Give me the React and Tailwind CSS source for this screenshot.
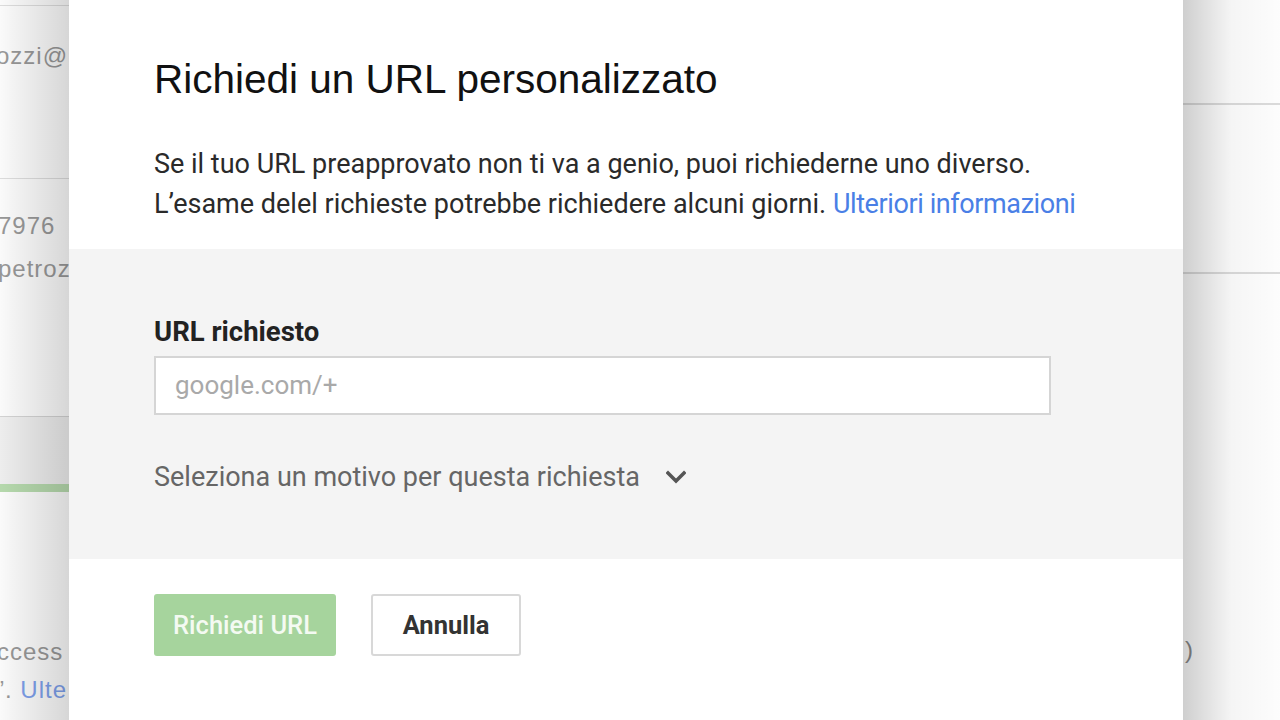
import React from 'react';

const ChevronDown = () => (
  <svg width="20" height="14" viewBox="0 0 20 14" fill="none">
    <path d="M2 3l8 8 8-8" stroke="#555" strokeWidth="3.5" strokeLinecap="square" />
  </svg>
);

const App = () => {
  return (
    <div className="flex h-[720px] w-[1280px] overflow-hidden bg-white font-['Roboto',sans-serif]">
      {/* page behind the dialog, left side */}
      <div className="relative w-[69px] shrink-0 overflow-hidden bg-white font-['Liberation_Sans',Arial,sans-serif] text-[24px] text-[#9a9a9a]">
        <div className="flex flex-col">
          <div className="h-[6px] border-b border-[#e0e0e0]" />
          <div className="mt-[35px] ml-[-4px] h-[137px] whitespace-nowrap leading-[30px] tracking-[1px]">ozzi@</div>
          <div className="border-t border-[#e0e0e0]" />
          <div className="mt-[32px] ml-[-2px] whitespace-nowrap leading-[30px] tracking-[1px]">7976</div>
          <div className="mt-[13px] ml-[-2px] whitespace-nowrap leading-[30px] tracking-[1px]">petroz:</div>
          <div className="mt-[132px] h-[68px] border-t border-[#d6d6d6] bg-[#f2f2f2]" />
          <div className="h-[8px] bg-[#b9ddb0]" />
          <div className="mt-[145px] ml-[-3px] whitespace-nowrap leading-[30px] tracking-[1px]">ccess</div>
          <div className="mt-[8px] ml-[-4px] whitespace-nowrap leading-[30px] tracking-[1px]">
            ”. <span className="text-[#7fa2ee]">Ulte</span>
          </div>
        </div>
        <div className="absolute inset-0 bg-gradient-to-r from-black/[0.02] to-black/[0.16]" />
      </div>

      {/* dialog */}
      <div className="flex w-[1114px] shrink-0 flex-col bg-white">
        <div className="px-[85px] pt-[54px] pb-[25px]">
          <h1 className="font-['Liberation_Sans',Arial,sans-serif] text-[40.5px] leading-[50px] text-[#111]">
            Richiedi un URL personalizzato
          </h1>
          <p className="mt-[40px] whitespace-nowrap text-[27px] leading-[40px] text-[#2a2a2a]">
            Se il tuo URL preapprovato non ti va a genio, puoi richiederne uno diverso.
            <br />
            L’esame delel richieste potrebbe richiedere alcuni giorni.{' '}
            <span className="tracking-[-0.4px] text-[#4a7fe6]">Ulteriori informazioni</span>
          </p>
        </div>

        <div className="flex h-[310px] flex-col bg-[#f4f4f4] px-[85px] pt-[67px]">
          <label className="text-[27.5px] font-bold leading-[32px] text-[#222]">URL richiesto</label>
          <div className="mt-[8px] flex h-[59px] w-[897px] items-center border-2 border-[#d5d5d5] bg-white px-[19px] text-[26px] text-[#a9a9a9]">
            google.com/+
          </div>
          <div className="mt-[46px] flex items-center gap-[26px] text-[27px] leading-[32px] text-[#666]">
            <span>Seleziona un motivo per questa richiesta</span>
            <ChevronDown />
          </div>
        </div>

        <div className="flex gap-[35px] px-[85px] pt-[35px]">
          <button className="h-[62px] w-[182px] rounded-[3px] bg-[#a6d49d] text-[25.5px] font-medium text-[#f4faf2]">
            Richiedi URL
          </button>
          <button className="h-[62px] w-[150px] rounded-[3px] border-2 border-[#d8d8d8] bg-white text-[25.5px] font-bold text-[#333]">
            Annulla
          </button>
        </div>
      </div>

      {/* page behind the dialog, right side */}
      <div className="relative flex-1 overflow-hidden bg-white font-['Liberation_Sans',Arial,sans-serif] text-[24px] text-[#8a8a8a]">
        <div className="flex flex-col">
          <div className="h-[105px] border-b-2 border-[#dcdcdc]" />
          <div className="h-[169px] border-b-2 border-[#dcdcdc]" />
          <div className="mt-[361px] ml-[2px] leading-[30px]">)</div>
        </div>
        <div className="absolute inset-0 bg-gradient-to-r from-black/[0.19] via-black/[0.04] to-black/[0.01]" />
      </div>
    </div>
  );
};

export default App;
